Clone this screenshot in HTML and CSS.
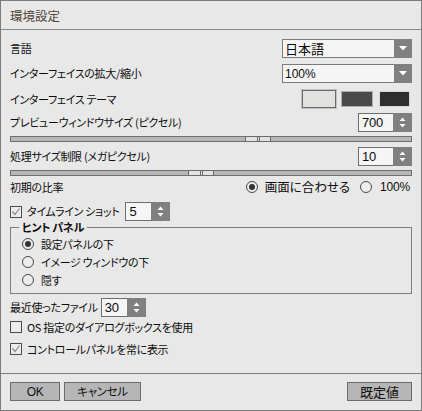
FILE: index.html
```html
<!DOCTYPE html>
<html lang="ja">
<head>
    <meta charset="UTF-8">
    <title>環境設定</title>
    <link rel="stylesheet" href="styles.css">
</head>
<body>
    <div class="dialog">
        <div class="titlebar">環境設定</div>
        <div class="content">
            <div class="row row-lang">
                <span>言語</span>
                <div class="select">
                    <span class="value">日本語</span>
                    <span class="select-arrow"><svg width="8" height="5" viewBox="0 0 8 5"><path d="M0 0h8L4 4.5z" fill="#fff"/></svg></span>
                </div>
            </div>
            <div class="row row-scale">
                <span>インターフェイスの拡大/縮小</span>
                <div class="select">
                    <span class="value num">100%</span>
                    <span class="select-arrow"><svg width="8" height="5" viewBox="0 0 8 5"><path d="M0 0h8L4 4.5z" fill="#fff"/></svg></span>
                </div>
            </div>
            <div class="row row-theme">
                <span>インターフェイス テーマ</span>
                <div class="themes">
                    <span class="swatch light selected"></span>
                    <span class="swatch mid"></span>
                    <span class="swatch dark"></span>
                </div>
            </div>
            <div class="row row-preview">
                <span>プレビューウィンドウサイズ (ピクセル)</span>
                <div class="spin">
                    <span class="value num">700</span>
                    <span class="spin-arrows"><svg width="7" height="11" viewBox="0 0 7 11"><path d="M0.5 4h6L3.5 0.5z M0.5 7h6L3.5 10.5z" fill="#fff"/></svg></span>
                </div>
            </div>
            <div class="slider slider-preview">
                <span class="thumb" style="left: 58.5%"></span>
            </div>
            <div class="row row-limit">
                <span>処理サイズ制限 (メガピクセル)</span>
                <div class="spin">
                    <span class="value num">10</span>
                    <span class="spin-arrows"><svg width="7" height="11" viewBox="0 0 7 11"><path d="M0.5 4h6L3.5 0.5z M0.5 7h6L3.5 10.5z" fill="#fff"/></svg></span>
                </div>
            </div>
            <div class="slider slider-limit">
                <span class="thumb" style="left: 44.3%"></span>
            </div>
            <div class="row row-ratio">
                <span>初期の比率</span>
                <div class="ratio-options">
                    <span class="radio checked"></span>
                    <span class="opt-text">画面に合わせる</span>
                    <span class="radio"></span>
                    <span class="opt-text num">100%</span>
                </div>
            </div>
            <div class="row row-timeline">
                <span class="check-line">
                    <span class="checkbox checked"><svg width="10" height="10" viewBox="0 0 10 10"><path d="M1.5 4.5L4 7.5L8.5 1.5" fill="none" stroke="#8a8a8a" stroke-width="1.2"/></svg></span>
                    <span>タイムライン ショット</span>
                </span>
                <div class="spin spin-small">
                    <span class="value num">5</span>
                    <span class="spin-arrows"><svg width="7" height="11" viewBox="0 0 7 11"><path d="M0.5 4h6L3.5 0.5z M0.5 7h6L3.5 10.5z" fill="#fff"/></svg></span>
                </div>
            </div>
            <div class="group">
                <span class="group-label">ヒント パネル</span>
                <div class="group-row"><span class="radio checked"></span><span>設定パネルの下</span></div>
                <div class="group-row"><span class="radio"></span><span>イメージ ウィンドウの下</span></div>
                <div class="group-row"><span class="radio"></span><span>隠す</span></div>
            </div>
            <div class="row row-recent">
                <span>最近使ったファイル</span>
                <div class="spin spin-small">
                    <span class="value num">30</span>
                    <span class="spin-arrows"><svg width="7" height="11" viewBox="0 0 7 11"><path d="M0.5 4h6L3.5 0.5z M0.5 7h6L3.5 10.5z" fill="#fff"/></svg></span>
                </div>
            </div>
            <div class="row row-os">
                <span class="check-line">
                    <span class="checkbox"></span>
                    <span>OS 指定のダイアログボックスを使用</span>
                </span>
            </div>
            <div class="row row-panel">
                <span class="check-line">
                    <span class="checkbox checked"><svg width="10" height="10" viewBox="0 0 10 10"><path d="M1.5 4.5L4 7.5L8.5 1.5" fill="none" stroke="#8a8a8a" stroke-width="1.2"/></svg></span>
                    <span>コントロールパネルを常に表示</span>
                </span>
            </div>
        </div>
        <div class="footer">
            <button class="btn btn-ok">OK</button>
            <button class="btn btn-cancel">キャンセル</button>
            <button class="btn btn-default">既定値</button>
        </div>
    </div>
</body>
</html>
```

FILE: styles.css
```css
body {
    margin: 0;
    font-family: "Noto Sans CJK JP", "Noto Sans", sans-serif;
    font-size: 11px;
    letter-spacing: -0.3px;
    font-feature-settings: "palt";
    color: #0c0c0c;
    background: #e8e8e8;
}

.dialog {
    width: 422px;
    height: 411px;
    box-sizing: border-box;
    border: 1px solid #7c7c7c;
    background: #e8e8e8;
    display: flex;
    flex-direction: column;
}

.titlebar {
    height: 28px;
    border-bottom: 1px solid #8a8a8a;
    padding-left: 9px;
    display: flex;
    align-items: center;
    font-size: 12.5px;
    letter-spacing: 0;
    color: #4e4438;
}

.content {
    flex: 1;
    padding: 0 9px;
}

.row {
    display: flex;
    align-items: center;
    justify-content: space-between;
    height: 19px;
    line-height: 1;
}

.row-lang { margin-top: 9px; }
.row-scale { margin-top: 6px; }
.row-theme { margin-top: 6px; height: 20px; }
.row-preview { margin-top: 4px; }
.slider-preview { margin-top: 4px; }
.row-limit { margin-top: 5px; }
.slider-limit { margin-top: 4px; }
.row-ratio { margin-top: 3px; height: 16px; }
.row-timeline { margin-top: 7px; justify-content: flex-start; gap: 6px; }
.row-recent { margin-top: 4px; justify-content: flex-start; gap: 3px; }
.row-os { margin-top: 2px; height: 16px; }
.row-panel { margin-top: 6px; height: 16px; }

.num {
    font-family: "Liberation Sans", sans-serif;
    font-size: 12px;
    letter-spacing: -0.2px;
}

/* dropdown */
.select {
    width: 130px;
    height: 19px;
    box-sizing: border-box;
    border: 1px solid #7a7a7a;
    background: #f5f5f5;
    display: flex;
}
.select .value {
    flex: 1;
    padding-left: 2px;
    display: flex;
    align-items: center;
    font-size: 13px;
    letter-spacing: 0;
}
.select .value.num { font-size: 12px; }
.select-arrow {
    width: 18px;
    margin: -1px -1px -1px 0;
    background: #808080;
    display: flex;
    align-items: center;
    justify-content: center;
}

/* spin box */
.spin {
    width: 54px;
    height: 19px;
    box-sizing: border-box;
    border: 1px solid #6e6e6e;
    background: #f5f5f5;
    display: flex;
}
.spin-small { width: 45px; }
.spin .value {
    flex: 1;
    padding-left: 3px;
    display: flex;
    align-items: center;
    font-size: 13px;
}
.spin-arrows {
    width: 19px;
    margin: -1px -1px -1px 0;
    background: #808080;
    display: flex;
    align-items: center;
    justify-content: center;
}

/* theme swatches */
.themes {
    display: flex;
    align-items: center;
    gap: 4px;
    padding-right: 2px;
}
.swatch {
    width: 32px;
    height: 16px;
    box-sizing: border-box;
}
.swatch.light {
    background: #e2e2e0;
    border: 1px solid #6a6a6a;
}
.swatch.selected {
    width: 36px;
    height: 20px;
    box-shadow: inset 0 0 0 1px #c2c2c2, inset 0 0 0 2px #6a6a6a;
    border: none;
}
.swatch.mid {
    background: #4a4a4a;
    border: 1px solid #b0b0b0;
}
.swatch.dark {
    background: #2f2f2f;
    border: 1px solid #d8d8d8;
    width: 31px;
    margin-left: 2px;
}

/* slider */
.slider {
    position: relative;
    height: 6px;
    box-sizing: border-box;
    background: #b6b6b6;
    border: 1px solid #707070;
}
.thumb {
    position: absolute;
    top: -1px;
    width: 26px;
    height: 6px;
    box-sizing: border-box;
    border: 1px solid #6a6a6a;
    background: linear-gradient(to right, transparent 11px, #6a6a6a 11px, #6a6a6a 12px, transparent 12px, transparent 13px, #6a6a6a 13px, #6a6a6a 14px, transparent 14px), #e2e2e2;
}

/* radio + checkbox */
.radio {
    width: 12px;
    height: 12px;
    box-sizing: border-box;
    border: 1px solid #4a4a4a;
    border-radius: 50%;
    background: #ececec;
    display: inline-flex;
    align-items: center;
    justify-content: center;
    flex-shrink: 0;
}
.radio.checked::after {
    content: "";
    width: 6px;
    height: 6px;
    border-radius: 50%;
    background: #333;
}
.ratio-options {
    display: flex;
    align-items: center;
    padding-right: 2px;
}
.ratio-options .opt-text {
    margin-left: 7px;
    margin-right: 10px;
    font-size: 12.5px;
    letter-spacing: 0;
}
.ratio-options .opt-text.num {
    margin-right: 0;
    margin-left: 8px;
    font-size: 12px;
    letter-spacing: -0.2px;
}

.check-line {
    display: flex;
    align-items: center;
    gap: 5px;
}
.checkbox {
    width: 12px;
    height: 12px;
    box-sizing: border-box;
    border: 1px solid #4a4a4a;
    background: #ececec;
    display: inline-flex;
    align-items: center;
    justify-content: center;
    flex-shrink: 0;
}

/* group box */
.group {
    position: relative;
    margin-top: 6px;
    height: 67px;
    box-sizing: border-box;
    border: 1px solid #7e7e7e;
    padding: 7px 0 4px 11px;
}
.group-label {
    position: absolute;
    top: -8px;
    left: 8px;
    padding: 0 3px;
    background: #e8e8e8;
    font-weight: bold;
    line-height: 15px;
}
.group-row {
    height: 18px;
    display: flex;
    align-items: center;
    gap: 7px;
    line-height: 1;
}

/* footer */
.footer {
    border-top: 1px solid #7c7c7c;
    padding: 8px 9px 0;
    box-sizing: border-box;
    height: 37px;
    display: flex;
    align-items: flex-start;
}
.btn {
    height: 19px;
    padding: 0;
    border: 1px solid #6c6c6c;
    background: #b6b6b6;
    font-family: "Noto Sans CJK JP", sans-serif;
    font-size: 11.5px;
    font-feature-settings: "palt";
    letter-spacing: -0.3px;
    color: #111;
    line-height: 1;
}
.btn-ok { width: 50px; font-family: "Liberation Sans", sans-serif; font-size: 12px; }
.btn-cancel { width: 77px; margin-left: 4px; }
.btn-default { width: 65px; margin-left: auto; font-size: 13px; letter-spacing: 0; }
```
